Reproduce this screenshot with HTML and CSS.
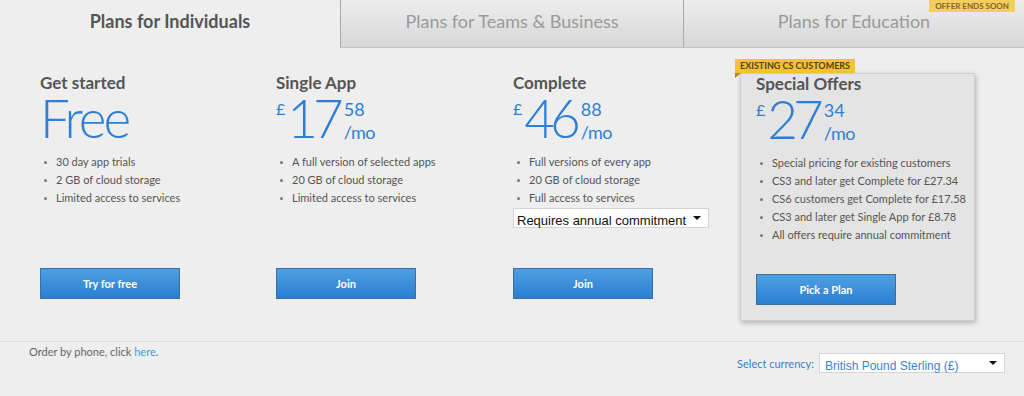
FILE: index.html
```html
<!DOCTYPE html>
<html lang="en">
<head>
    <meta charset="UTF-8">
    <title>Creative Cloud Plans</title>
    <link rel="stylesheet" href="styles.css">
</head>
<body>
    <div class="tabs">
        <div class="tab active">Plans for Individuals</div>
        <div class="tab">Plans for Teams &amp; Business</div>
        <div class="tab">Plans for Education<span class="offer-badge">OFFER ENDS SOON</span></div>
    </div>

    <div class="plans">
        <div class="plan">
            <h3>Get started</h3>
            <div class="price"><span class="num free">Free</span></div>
            <ul class="features">
                <li>30 day app trials</li>
                <li>2 GB of cloud storage</li>
                <li>Limited access to services</li>
            </ul>
            <a href="#" class="btn">Try for free</a>
        </div>

        <div class="plan">
            <h3>Single App</h3>
            <div class="price">
                <span class="cur">£</span><span class="num">17</span>
                <span class="frac"><span class="cents">58</span><span class="per">/mo</span></span>
            </div>
            <ul class="features">
                <li>A full version of selected apps</li>
                <li>20 GB of cloud storage</li>
                <li>Limited access to services</li>
            </ul>
            <a href="#" class="btn">Join</a>
        </div>

        <div class="plan">
            <h3>Complete</h3>
            <div class="price">
                <span class="cur">£</span><span class="num">46</span>
                <span class="frac"><span class="cents">88</span><span class="per">/mo</span></span>
            </div>
            <ul class="features">
                <li>Full versions of every app</li>
                <li>20 GB of cloud storage</li>
                <li>Full access to services</li>
            </ul>
            <div class="select-wrap commit">
                <select>
                    <option>Requires annual commitment</option>
                </select>
            </div>
            <a href="#" class="btn">Join</a>
        </div>

        <div class="plan special">
            <span class="cs-badge">EXISTING CS CUSTOMERS</span>
            <h3>Special Offers</h3>
            <div class="price">
                <span class="cur">£</span><span class="num">27</span>
                <span class="frac"><span class="cents">34</span><span class="per">/mo</span></span>
            </div>
            <ul class="features">
                <li>Special pricing for existing customers</li>
                <li>CS3 and later get Complete for £27.34</li>
                <li>CS6 customers get Complete for £17.58</li>
                <li>CS3 and later get Single App for £8.78</li>
                <li>All offers require annual commitment</li>
            </ul>
            <a href="#" class="btn">Pick a Plan</a>
        </div>
    </div>

    <footer>
        <p class="phone">Order by phone, click <a href="#">here</a>.</p>
        <div class="currency">
            <label>Select currency:</label>
            <div class="select-wrap">
                <select>
                    <option>British Pound Sterling (£)</option>
                </select>
            </div>
        </div>
    </footer>
</body>
</html>
```

FILE: styles.css
```css
* {
    margin: 0;
    padding: 0;
    box-sizing: border-box;
}

body {
    background: #eeeeee;
    font-family: Lato, "Open Sans", sans-serif;
    color: #555;
    width: 1024px;
    height: 396px;
    overflow: hidden;
}

/* tabs */
.tabs {
    display: grid;
    grid-template-columns: 340px 343px 1fr;
    height: 48px;
}

.tab {
    position: relative;
    text-align: center;
    font-size: 18px;
    line-height: 42px;
    color: #9a9a9a;
    background: linear-gradient(#ededed, #d7d7d7);
    border-left: 1px solid #a9a9a9;
    border-bottom: 1px solid #c3c3c3;
}

.tab.active {
    background: #eeeeee;
    border: none;
    color: #555;
    font-weight: 700;
}

.offer-badge {
    position: absolute;
    top: 0;
    right: 9px;
    background: #f6cc5b;
    color: #7b6530;
    font-size: 8px;
    font-weight: 700;
    line-height: 12px;
    padding: 0 6px;
}

/* plans */
.plans {
    display: grid;
    grid-template-columns: 236px 237px 227px 235px;
    padding-left: 40px;
    margin-top: 25px;
}

.plan {
    display: flex;
    flex-direction: column;
    padding-bottom: 22px;
}

.plan h3 {
    font-size: 17px;
    line-height: 20px;
    font-weight: 700;
    color: #555;
}

.price {
    display: flex;
    height: 50px;
    color: #2d7fd6;
}

.price .num {
    font-size: 53px;
    font-weight: 300;
    line-height: 50px;
    letter-spacing: -5px;
}

.price .num.free {
    letter-spacing: -3px;
}

.price .cur {
    font-size: 16px;
    line-height: 18px;
    margin-top: 7px;
    margin-right: 2px;
}

.price .frac {
    display: flex;
    flex-direction: column;
    justify-content: space-between;
    margin-left: 5px;
    font-size: 18px;
    line-height: 18px;
    padding: 7px 0 2px;
}

.price .per {
    letter-spacing: -0.5px;
}

.features {
    list-style: none;
    margin-top: 10px;
    font-size: 11px;
    line-height: 18px;
    color: #555;
}

.features li {
    position: relative;
    padding-left: 16px;
    white-space: nowrap;
}

.features li::before {
    content: "";
    position: absolute;
    left: 4px;
    top: 8px;
    width: 3px;
    height: 3px;
    border-radius: 50%;
    background: #777;
}

.btn {
    margin-top: auto;
    display: block;
    width: 140px;
    height: 31px;
    line-height: 29px;
    text-align: center;
    font-size: 11px;
    font-weight: 700;
    color: #fff;
    text-decoration: none;
    background: linear-gradient(#4ea0e2, #2b7ed1);
    border: 1px solid #3a6f9f;
}

.select-wrap {
    position: relative;
    width: 186px;
    height: 20px;
    background: #fff;
    border: 1px solid #d4d4d4;
}

.select-wrap::after {
    content: "";
    position: absolute;
    right: 7px;
    top: 7px;
    border-left: 4px solid transparent;
    border-right: 4px solid transparent;
    border-top: 4px solid #111;
}

.select-wrap select {
    appearance: none;
    width: 100%;
    height: 100%;
    border: none;
    background: transparent;
    font-family: "Liberation Sans", Arial, sans-serif;
    font-size: 12px;
    padding-left: 5px;
    color: #3a82d0;
    outline: none;
}

.commit {
    width: 196px;
    margin-top: 1px;
}

.commit select {
    font-size: 13px;
    color: #111;
    padding-left: 3px;
}

/* special offers box */
.plan.special {
    position: relative;
    padding: 0 5px 15px 15px;
    background: #e4e4e4;
    border: 1px solid #cdcdcd;
    box-shadow: 1px 2px 5px rgba(0, 0, 0, 0.25);
}

.special .features {
    margin-bottom: 30px;
}

.cs-badge {
    position: absolute;
    left: -6px;
    top: -15px;
    background: #f7c22f;
    color: #4f4220;
    font-size: 9px;
    font-weight: 700;
    line-height: 14px;
    padding: 0 5px;
}

.cs-badge::after {
    content: "";
    position: absolute;
    left: 0;
    top: 14px;
    border-top: 5px solid #b08a1c;
    border-left: 6px solid transparent;
    transform: scaleX(-1);
}

/* footer */
footer {
    display: flex;
    justify-content: space-between;
    margin-top: 20px;
    border-top: 1px solid #dcdcdc;
    padding: 1px 19px 0 29px;
}

.phone {
    font-size: 11px;
    line-height: 18px;
    color: #666;
}

.phone a {
    color: #3d9ee5;
    text-decoration: none;
}

.currency {
    display: flex;
    align-items: center;
    gap: 5px;
    margin-top: 10px;
}

.currency label {
    font-size: 11px;
    color: #3a80c9;
}
```
